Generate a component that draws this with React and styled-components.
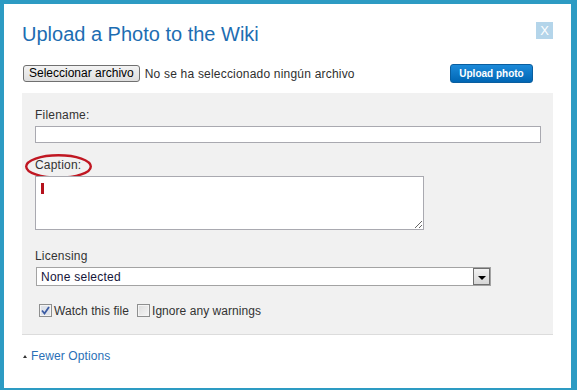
import React from 'react'
import styled, { createGlobalStyle } from 'styled-components'

const GlobalStyle = createGlobalStyle`
  html, body {
    margin: 0;
    padding: 0;
    background: #2d9bc3;
  }
  * {
    box-sizing: border-box;
  }
`

const Page = styled.div`
  width: 577px;
  height: 390px;
  padding: 4px 6px 2px 4px;
  background: #2d9bc3;
  font-family: 'Liberation Sans', Arial, sans-serif;
`

const Dialog = styled.div`
  position: relative;
  height: 384px;
  padding: 18px 18px 0 18px;
  background: #ffffff;
`

const Title = styled.h1`
  margin: 0;
  color: #1d6db2;
  font-weight: 400;
  font-size: 20px;
  line-height: 24px;
`

const CloseButton = styled.button`
  all: unset;
  position: absolute;
  top: 18px;
  right: 18px;
  display: flex;
  align-items: center;
  justify-content: center;
  width: 17px;
  height: 17px;
  background: #b4d5ea;
  color: #ffffff;
  font-size: 13px;
  line-height: 17px;
  cursor: pointer;
`

const FileRow = styled.div`
  display: flex;
  align-items: center;
  height: 19px;
  margin-top: 18px;
`

const BrowseButton = styled.button`
  height: 17px;
  margin: 0 0 0 1px;
  padding: 0 5px;
  border: 1px solid #707070;
  border-radius: 3px;
  background: linear-gradient(#f3f3f3, #dedede);
  color: #000000;
  font-family: inherit;
  font-size: 12px;
  line-height: 15px;
`

const FileStatus = styled.span`
  margin-left: 5px;
  color: #2f2f2f;
  font-size: 12px;
  letter-spacing: 0.2px;
`

const UploadButton = styled.button`
  width: 83px;
  height: 19px;
  margin: 0 20px 0 auto;
  padding: 0;
  border: 1px solid #0a5e9f;
  border-radius: 3px;
  background: linear-gradient(#1c8ad9, #0066b4);
  color: #ffffff;
  font-family: inherit;
  font-weight: 700;
  font-size: 10px;
  line-height: 17px;
`

const Panel = styled.div`
  margin-top: 10px;
  padding: 15px 12px 17px 13px;
  background: #f1f1f1;
  border-bottom: 1px solid #dcdcdc;
`

const Field = styled.div`
  margin-top: ${(p) => p.$gap || 0}px;
`

const Label = styled.label`
  position: relative;
  display: block;
  margin-bottom: 4px;
  color: #333333;
  font-size: 12px;
  line-height: 14px;
  letter-spacing: 0.2px;
`

const Circle = styled.svg`
  position: absolute;
  top: -4px;
  left: -10px;
  overflow: visible;
`

const TextInput = styled.input`
  display: block;
  width: 506px;
  height: 17px;
  margin: 0;
  padding: 0 3px;
  border: 1px solid #a9a9b0;
  background: #ffffff;
  font-family: inherit;
  font-size: 12px;
  outline: none;
`

const AreaWrap = styled.div`
  position: relative;
  width: 389px;
`

const TextArea = styled.textarea`
  display: block;
  width: 389px;
  height: 54px;
  margin: 0;
  padding: 2px 3px;
  border: 1px solid #a9a9b0;
  background: #ffffff;
  font-family: inherit;
  font-size: 12px;
  outline: none;
`

const Cursor = styled.span`
  position: absolute;
  top: 7px;
  left: 6px;
  width: 3px;
  height: 11px;
  background: #b5121d;
`

const SelectBox = styled.div`
  display: flex;
  align-items: center;
  width: 455px;
  height: 19px;
  margin-left: 1px;
  border: 1px solid #a3a3a3;
  background: #ffffff;
`

const SelectText = styled.span`
  flex: 1;
  padding-left: 4px;
  color: #15153a;
  font-size: 12px;
  letter-spacing: 0.25px;
`

const ArrowButton = styled.span`
  display: flex;
  align-items: center;
  justify-content: center;
  width: 17px;
  height: 17px;
  border: 1px solid #6f6f6f;
  background: linear-gradient(#f2f2f2, #d6d6d6);
`

const ArrowDown = styled.span`
  width: 0;
  height: 0;
  margin-top: 2px;
  border-left: 4px solid transparent;
  border-right: 4px solid transparent;
  border-top: 4px solid #000000;
`

const CheckRow = styled.div`
  display: flex;
  align-items: center;
  height: 13px;
  margin-top: 18px;
  padding-left: 4px;
`

const CheckLabel = styled.label`
  display: flex;
  align-items: center;
  margin-right: 8px;
  color: #333333;
  font-size: 12px;
  letter-spacing: 0.05px;
`

const Box = styled.span`
  display: flex;
  align-items: center;
  justify-content: center;
  width: 13px;
  height: 13px;
  margin-right: 2px;
  border: 1px solid #8e8f8f;
  background: ${(p) => (p.$checked ? '#dfe3ea' : 'linear-gradient(135deg, #dcdcdc, #f6f6f6)')};
  box-shadow: inset 0 0 0 1px #f4f4f4;
`

const Footer = styled.div`
  display: flex;
  align-items: center;
  padding-top: 14px;
`

const ToggleLink = styled.a`
  display: flex;
  align-items: center;
  color: #2a6fb6;
  font-size: 12px;
  line-height: 14px;
  letter-spacing: 0.1px;
  text-decoration: none;
  cursor: pointer;
`

const ArrowUp = styled.span`
  width: 0;
  height: 0;
  margin: 0 4px 0 1px;
  border-left: 2.5px solid transparent;
  border-right: 2.5px solid transparent;
  border-bottom: 3px solid #333333;
`

function Checkbox({ checked, children }) {
  return (
    <CheckLabel>
      <Box $checked={checked}>
        {checked && (
          <svg width="9" height="9" viewBox="0 0 9 9">
            <path d="M1 4.5 L3.5 7.5 L8 1" fill="none" stroke="#3b5ba3" strokeWidth="1.8" />
          </svg>
        )}
      </Box>
      {children}
    </CheckLabel>
  )
}

export default function App() {
  return (
    <Page>
      <GlobalStyle />
      <Dialog>
        <Title>Upload a Photo to the Wiki</Title>
        <CloseButton type="button">X</CloseButton>

        <FileRow>
          <BrowseButton type="button">Seleccionar archivo</BrowseButton>
          <FileStatus>No se ha seleccionado ningún archivo</FileStatus>
          <UploadButton type="button">Upload photo</UploadButton>
        </FileRow>

        <Panel>
          <Field>
            <Label>Filename:</Label>
            <TextInput type="text" />
          </Field>

          <Field $gap={15}>
            <Label>
              Caption:
              <Circle width="67" height="25" viewBox="0 0 67 25">
                <ellipse cx="33.5" cy="12.5" rx="32.3" ry="11.3" fill="none" stroke="#c01722" strokeWidth="2.4" />
              </Circle>
            </Label>
            <AreaWrap>
              <TextArea />
              <Cursor />
            </AreaWrap>
          </Field>

          <Field $gap={19}>
            <Label>Licensing</Label>
            <SelectBox>
              <SelectText>None selected</SelectText>
              <ArrowButton>
                <ArrowDown />
              </ArrowButton>
            </SelectBox>
          </Field>

          <CheckRow>
            <Checkbox checked>Watch this file</Checkbox>
            <Checkbox>Ignore any warnings</Checkbox>
          </CheckRow>
        </Panel>

        <Footer>
          <ToggleLink>
            <ArrowUp />
            Fewer Options
          </ToggleLink>
        </Footer>
      </Dialog>
    </Page>
  )
}
